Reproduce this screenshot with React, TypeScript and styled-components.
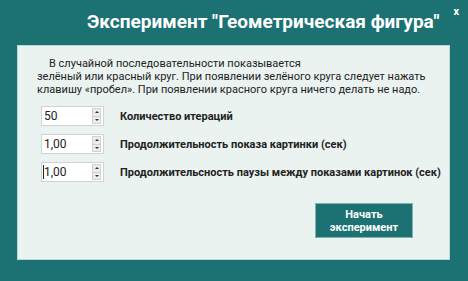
import React, { FC } from 'react';
import styled, { createGlobalStyle } from 'styled-components';

const TEAL = '#1c7272';

const GlobalStyle = createGlobalStyle`
  html, body {
    margin: 0;
    padding: 0;
    background-color: ${TEAL};
    font-family: Roboto, "Liberation Sans", Arial, sans-serif;
  }
`;

const Window = styled.div`
  display: flex;
  flex-direction: column;
  width: 468px;
  height: 281px;
  background-color: ${TEAL};
  overflow: hidden;
`;

const Header = styled.div`
  display: flex;
  align-items: flex-start;
  height: 45px;
  padding: 0 9px 0 87px;
  box-sizing: border-box;
`;

const Title = styled.h1`
  margin: 10px 0 0;
  font-size: 19px;
  line-height: 24px;
  font-weight: 700;
  color: #ffffff;
  white-space: nowrap;
`;

const CloseButton = styled.span`
  margin: 5px 0 0 auto;
  font-size: 11px;
  font-weight: 700;
  color: #ffffff;
`;

const Panel = styled.div`
  display: flex;
  flex-direction: column;
  margin: 0 18px 0 17px;
  height: 215px;
  box-sizing: border-box;
  padding: 11px 0 0 19px;
  background-color: #ebf3f1;
  border: 1px solid #bcd8d4;
`;

const Description = styled.p`
  margin: 0;
  font-size: 11px;
  line-height: 13px;
  color: #222222;
  text-indent: 12px;
`;

const Fields = styled.div`
  display: flex;
  flex-direction: column;
  gap: 8px;
  margin: 10px 0 0 4px;
`;

const FieldRow = styled.div`
  display: flex;
  align-items: center;
  gap: 16px;
  height: 20px;
`;

const SpinBox = styled.div`
  display: flex;
  align-items: center;
  width: 63px;
  height: 20px;
  box-sizing: border-box;
  padding: 0 2px 0 1px;
  background-color: #ffffff;
  border: 1px solid #cfd3d2;
`;

const SpinValue = styled.span<{ $caret?: boolean }>`
  flex: 1;
  font-size: 12px;
  color: #222222;
  border-left: 1px solid ${({ $caret }) => ($caret ? '#222222' : 'transparent')};
`;

const SpinArrows = styled.div`
  display: flex;
  flex-direction: column;
  width: 9px;
  height: 16px;
  border: 1px solid #d2d2d2;
  box-sizing: border-box;
`;

const Arrow = styled.div<{ $down?: boolean }>`
  display: flex;
  flex: 1;
  align-items: center;
  justify-content: center;
  background-color: #ececec;
  border-top: ${({ $down }) => ($down ? '1px solid #d2d2d2' : 'none')};

  &::after {
    content: '';
    border-left: 2px solid transparent;
    border-right: 2px solid transparent;
    ${({ $down }) => ($down ? 'border-top: 2px solid #333;' : 'border-bottom: 2px solid #333;')}
  }
`;

const FieldLabel = styled.span`
  font-size: 11px;
  font-weight: 700;
  color: #222222;
  white-space: nowrap;
`;

const StartButton = styled.button`
  align-self: flex-end;
  width: 98px;
  height: 35px;
  margin: 21px 36px 0 0;
  padding: 0;
  background-color: ${TEAL};
  border: 1px solid #7fb3b0;
  color: #ffffff;
  font-family: inherit;
  font-size: 11px;
  font-weight: 700;
  line-height: 13px;
`;

const fields = [
  { value: '50', label: 'Количество итераций' },
  { value: '1,00', label: 'Продолжительность показа картинки (сек)' },
  { value: '1,00', label: 'Продолжительсность паузы между показами картинок (сек)', caret: true },
];

const App: FC = () => (
  <>
    <GlobalStyle />
    <Window>
      <Header>
        <Title>Эксперимент "Геометрическая фигура"</Title>
        <CloseButton>x</CloseButton>
      </Header>
      <Panel>
        <Description>
          В случайной последовательности показывается
          <br />
          зелёный или красный круг. При появлении зелёного круга следует нажать клавишу «пробел». При
          появлении красного круга ничего делать не надо.
        </Description>
        <Fields>
          {fields.map((field) => (
            <FieldRow key={field.label}>
              <SpinBox>
                <SpinValue $caret={field.caret}>{field.value}</SpinValue>
                <SpinArrows>
                  <Arrow />
                  <Arrow $down />
                </SpinArrows>
              </SpinBox>
              <FieldLabel>{field.label}</FieldLabel>
            </FieldRow>
          ))}
        </Fields>
        <StartButton>
          Начать
          <br />
          эксперимент
        </StartButton>
      </Panel>
    </Window>
  </>
);

export default App;
